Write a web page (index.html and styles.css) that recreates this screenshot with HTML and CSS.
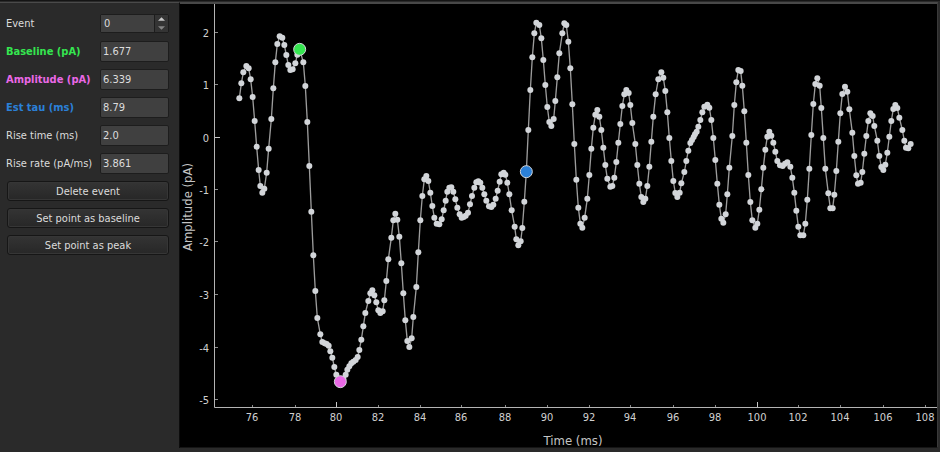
FILE: index.html
```html
<!DOCTYPE html>
<html lang="en">
<head>
<meta charset="utf-8">
<meta name="viewport" content="width=device-width, initial-scale=1">
<title>Event viewer</title>
<link rel="stylesheet" href="styles.css">
</head>
<body>
<main class="window">
  <form class="panel">
    <div class="field">
      <label for="event">Event</label>
      <div class="spin">
        <input id="event" type="number" value="0" min="0">
        <div class="steps">
          <button type="button" aria-label="Next event"><svg viewBox="0 0 8 4"><path d="M4 0 8 4H0z"/></svg></button>
          <button type="button" class="down" aria-label="Previous event"><svg viewBox="0 0 8 4"><path d="M0 0H8L4 4z"/></svg></button>
        </div>
      </div>
    </div>
    <div class="field baseline"><label for="baseline">Baseline (pA)</label><input id="baseline" type="text" value="1.677"></div>
    <div class="field amplitude"><label for="amplitude">Amplitude (pA)</label><input id="amplitude" type="text" value="6.339"></div>
    <div class="field tau"><label for="tau">Est tau (ms)</label><input id="tau" type="text" value="8.79"></div>
    <div class="field"><label for="rise-time">Rise time (ms)</label><input id="rise-time" type="text" value="2.0"></div>
    <div class="field"><label for="rise-rate">Rise rate (pA/ms)</label><input id="rise-rate" type="text" value="3.861"></div>
    <button type="button" class="action">Delete event</button>
    <button type="button" class="action">Set point as baseline</button>
    <button type="button" class="action">Set point as peak</button>
  </form>
  <section class="plot">
    <svg id="chart" viewBox="180 4 757 443" role="img" aria-label="Amplitude over time"></svg>
  </section>
</main>
<script src="chart.js"></script>
</body>
</html>
```
FILE: styles.css
```css
* {
  box-sizing: border-box;
}

body {
  margin: 0;
  background: #2a2a2a;
  color: #dcdcdc;
  font-family: "DejaVu Sans Condensed", "Noto Sans", sans-serif;
  font-size: 11px;
}

.window {
  display: grid;
  grid-template-columns: 180px 1fr;
  min-height: 100vh;
  padding: 1px 2px 4px 0;
  border-top: 1px solid #141414;
  border-bottom: 1px solid #242424;
}

.panel {
  display: flex;
  flex-direction: column;
  gap: 7px;
  padding: 10px 10px 0 6px;
  border-top: 1px solid #4a4a4a;
  border-right: 1px solid #0c0c0c;
}

.field {
  display: grid;
  grid-template-columns: 94px 1fr;
  align-items: center;
  height: 21px;
}

.field label {
  white-space: nowrap;
}

.baseline label,
.amplitude label,
.tau label {
  font-weight: bold;
}

.baseline label {
  color: #35e650;
}

.amplitude label {
  color: #ea68e6;
}

.tau label {
  color: #2b80d8;
}

input {
  width: 100%;
  min-width: 0;
  height: 21px;
  padding: 0 2px;
  border: 1px solid #1d1d1d;
  border-radius: 2px;
  background: #404040;
  color: #dcdcdc;
  font: inherit;
}

.spin {
  display: flex;
  height: 19px;
  border: 1px solid #1d1d1d;
  border-radius: 2px;
}

.spin input {
  flex: 1;
  height: 17px;
  padding: 0 3px;
  border: 0;
  border-right: 1px solid #1d1d1d;
  border-radius: 0;
  appearance: textfield;
}

.spin input::-webkit-inner-spin-button {
  appearance: none;
}

.steps {
  display: grid;
  width: 13px;
  background: #343434;
}

.steps button {
  display: flex;
  align-items: center;
  justify-content: center;
  padding: 0;
  border: 0;
  background: none;
}

.steps svg {
  width: 7px;
  height: 4px;
  fill: #c8c8c8;
}

.steps .down svg {
  fill: #858585;
}

.action {
  height: 20px;
  margin-left: 1px;
  padding: 0;
  border: 1px solid #161616;
  border-radius: 3px;
  background: linear-gradient(#343434, #272727);
  box-shadow: inset 0 0 0 1px #363636;
  color: #dcdcdc;
  font: inherit;
}

.plot {
  min-width: 0;
  border-top: 2px solid #484848;
  border-right: 1px solid #3a3a3a;
  border-bottom: 1px solid #151515;
  background: #000;
}

#chart {
  display: block;
  width: 100%;
}

.axis {
  fill: none;
  stroke: #b4b4b4;
  stroke-width: 1;
}

.tick {
  stroke: #8c8c8c;
  stroke-width: 1;
}

.tick.major {
  stroke: #c8c8c8;
}

.number {
  fill: #d0d0d0;
  font-size: 11px;
}

.title {
  fill: #c4c4c4;
  font-size: 13px;
  text-anchor: middle;
}

.mid {
  text-anchor: middle;
}

.end {
  text-anchor: end;
}

.trace {
  fill: none;
  stroke: #9c9c9c;
  stroke-width: 4;
}

.dot {
  fill: #d2d5d9;
}

.mark {
  stroke: #d2d5d9;
  stroke-width: 3;
}

.mark.green {
  fill: #35e650;
}

.mark.pink {
  fill: #ea68e6;
}

.mark.blue {
  fill: #2b80d8;
}
```
FILE: chart.js
```js
const NS = "http://www.w3.org/2000/svg";
const chart = document.getElementById("chart");

function add(parent, name, attrs, text) {
  const node = document.createElementNS(NS, name);
  for (const key in attrs) node.setAttribute(key, attrs[key]);
  if (text !== undefined) node.textContent = text;
  parent.appendChild(node);
  return node;
}

// Axis value and its position along the axis.
const xTicks = [[76, 252], [78, 295], [80, 336], [82, 378], [84, 420], [86, 461],
  [88, 505], [90, 547], [92, 589], [94, 630], [96, 673], [98, 715], [100, 757],
  [102, 798], [104, 840], [106, 883], [108, 925]];
const yTicks = [[2, 32], [1, 84], [0, 137], [-1, 189], [-2, 241], [-3, 294], [-4, 347], [-5, 399]];

for (const [value, x] of xTicks) {
  const major = value === 80 || value === 100;
  add(chart, "path", { class: major ? "tick major" : "tick", d: `M${x + 0.5} 407v${major ? -5 : -2}` });
  add(chart, "text", { class: "number mid", x, y: 421 }, value);
}
for (const [value, y] of yTicks) {
  const major = value === 0;
  add(chart, "path", { class: major ? "tick major" : "tick", d: `M215 ${y + 0.5}h${major ? 5 : 3}` });
  add(chart, "text", { class: "number end", x: 209, y: y + 5 }, value);
}
add(chart, "path", { class: "axis", d: "M214.5 4V407.5H937" });
add(chart, "text", { class: "title", x: 573, y: 445 }, "Time (ms)");
add(chart, "text", { class: "title", transform: "translate(192 207) rotate(-90)" }, "Amplitude (pA)");

// Samples in thirds of a unit, in runs that share an origin.
const runs = [
  [645, 0, `73,295 79,250 85,217 94,198 101,205 107,238 113,291 119,363 125,440 131,510 136,558
    142,578 148,566 155,518 161,446 169,357 175,265 181,187 187,132 194,109 202,113 208,135
    214,165 220,195 226,210 233,208 241,190 247,164 254,148 265,187 271,258 277,366 283,498`],
  [870, 600, `64,35 70,166 76,273 82,354 91,403 97,426 104,430 110,432 116,437 121,454 127,473
    133,501 139,524 151,545 160,536 167,524 172,509 178,499 184,490 190,485 197,480 203,471
    208,450 214,419 220,379 226,339 235,303 241,280 247,271 253,286 259,307 265,331 271,339
    278,334 283,301 289,243 295,178 304,113 310,61 316,41 322,59 328,110 334,190 340,280
    346,361 352,423 358,441 365,415 370,351 379,261 385,157 391,61`],
  [1245, 360, `22,228 28,178 34,168 40,183 46,218 52,258 58,293 65,311 73,313 80,298 86,271
    92,242 97,215 103,203 109,202 115,215 121,238 127,263 134,283 140,293 146,291 152,287
    159,278 165,253 171,228 178,203 184,187 190,184 196,188 202,203 208,223 214,242 222,259
    229,261 235,254 242,236 248,212 254,185 259,163 266,158 271,164 277,188 283,223 290,271
    299,320 304,358 310,376 317,364 322,324 328,245 334,155`],
  [1500, 0, `85,390 91,270 97,172 103,100 109,68 118,75 124,115 130,180 136,255 142,321 148,366
    154,378 161,357 166,303 172,232 178,160 187,100 193,70 199,75 205,125 211,205 217,313
    223,432 229,539 235,623 241,671 247,683 254,653 262,596 268,525 274,446 280,383 286,344
    292,330 298,350 304,390 310,443 316,495 322,536 331,560 337,558 343,533 349,486 355,428
    361,372 367,318 373,283 379,270 386,279 391,315 397,369 406,432 412,495 418,551 424,591
    430,606 436,596 442,558 448,500 454,425 460,350 467,283 475,238`],
  [1920, 150, `64,67 70,83 76,123 82,187 88,264 94,333 100,393 106,429 112,441 119,428 124,400
    133,366 139,333 145,302 151,279 156,270 161,261 165,253 170,245 175,230 181,210 187,187
    193,170 202,164 208,173 214,210 220,264 226,330 232,401 238,464 244,506 250,518 257,493
    262,433 268,353 277,258 283,165 289,97 295,60 302,63 307,107 313,184 319,278 325,375
    331,456 337,511 346,533 352,521 358,479 364,418 370,353 376,299 382,260 388,245 394,257
    400,278 406,305 412,333`],
  [2310, 150, `30,346 38,348 45,341 52,337 61,350 67,383 73,428 79,482 85,530 91,556 100,556
    106,521 112,449 118,356 124,255 130,162 136,102 142,85 149,107 154,174 160,264 166,356
    175,430 181,475 188,475 193,434 199,363 205,275 211,190 217,132 225,110 232,125 238,178
    247,248 253,318 259,376 264,401 272,398 277,366 283,311 289,258 295,213 301,190 308,198
    313,228 322,272 328,318 334,351 340,360 346,344 352,308 358,260 364,213 370,177 376,165
    382,174 388,203 397,240 403,272 408,293 415,295 422,282`]
];

const points = runs.flatMap(([dx, dy, list]) =>
  list.trim().split(/\s+/).map(pair => {
    const [x, y] = pair.split(",").map(Number);
    return [x + dx, y + dy];
  }));

const data = add(chart, "g", { transform: "scale(0.33333)" });
add(data, "polyline", { class: "trace", points: points.join(" ") });
for (const [cx, cy] of points) add(data, "circle", { class: "dot", cx, cy, r: 9 });
add(data, "circle", { class: "mark green", cx: 899, cy: 148, r: 18 });
add(data, "circle", { class: "mark pink", cx: 1021, cy: 1145, r: 18 });
add(data, "circle", { class: "mark blue", cx: 1579, cy: 515, r: 18 });
```
